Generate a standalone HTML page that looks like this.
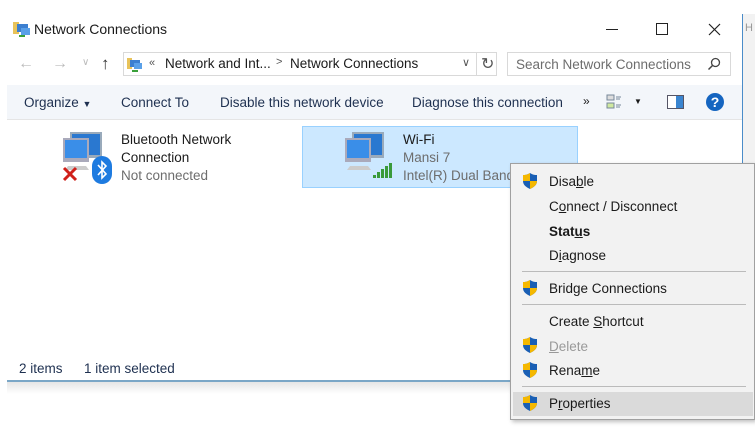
<!DOCTYPE html>
<html><head><style>
body{margin:0;width:755px;height:430px;background:#fff;position:relative;overflow:hidden;font-family:"Liberation Sans",sans-serif;font-size:13.5px;color:#1a1a1a}
.a{position:absolute;white-space:nowrap}
.g{color:#6d6d6d}
.menu .it{position:absolute;left:38px}
u{text-decoration:underline}
</style></head><body>
<!-- window frame -->
<div class="a" style="left:742px;top:14px;width:1px;height:150px;background:#4a8cc9"></div>
<div class="a" style="left:743px;top:14px;width:12px;height:150px;background:#f2f2f2"></div>
<div class="a" style="left:745px;top:22px;font-size:11px;color:#999">H</div>
<!-- title -->
<svg class="a" style="left:12px;top:20px" width="20" height="18"><rect x="1" y="2" width="6" height="12" fill="#e8c35a"/><rect x="5" y="4" width="11" height="8" fill="#3c7fd0"/><rect x="9" y="8" width="9" height="7" fill="#5aa0e8"/><rect x="7" y="15" width="6" height="2" fill="#3aa03a"/></svg>
<div class="a" style="left:34px;top:21px;font-size:14px">Network Connections</div>
<div class="a" style="left:606px;top:29px;width:12px;height:1px;background:#222"></div>
<div class="a" style="left:656px;top:23px;width:10px;height:10px;border:1px solid #222"></div>
<svg class="a" style="left:708px;top:23px" width="13" height="13"><path d="M1 1L12 12M12 1L1 12" stroke="#222" stroke-width="1.2"/></svg>
<!-- nav -->
<div class="a" style="left:18px;top:55px;color:#bbb;font-size:16px">←</div>
<div class="a" style="left:52px;top:55px;color:#bbb;font-size:16px">→</div>
<div class="a" style="left:82px;top:57px;color:#bbb;font-size:10px">∨</div>
<div class="a" style="left:101px;top:54px;color:#333;font-size:17px">↑</div>
<div class="a" style="left:123px;top:52px;width:374px;height:24px;border:1px solid #d9d9d9;box-sizing:border-box"></div>
<div class="a" style="left:476px;top:52px;width:1px;height:24px;background:#d9d9d9"></div>
<svg class="a" style="left:126px;top:56px" width="18" height="17"><rect x="1" y="2" width="5" height="11" fill="#e8c35a"/><rect x="4" y="4" width="10" height="7" fill="#3c7fd0"/><rect x="8" y="7" width="8" height="6" fill="#5aa0e8"/><rect x="6" y="14" width="6" height="2" fill="#3aa03a"/></svg>
<div class="a" style="left:149px;top:57px;font-size:11px;color:#555">«</div>
<div class="a" style="left:165px;top:56px">Network and Int...</div>
<div class="a" style="left:276px;top:56px;font-size:11px;color:#555">&gt;</div>
<div class="a" style="left:290px;top:56px">Network Connections</div>
<div class="a" style="left:462px;top:56px;font-size:11px;color:#555">∨</div>
<div class="a" style="left:481px;top:54px;font-size:16px;color:#555">↻</div>
<div class="a" style="left:507px;top:52px;width:224px;height:24px;border:1px solid #d9d9d9;box-sizing:border-box"></div>
<div class="a g" style="left:516px;top:57px">Search Network Connections</div>
<svg class="a" style="left:707px;top:57px" width="14" height="14"><circle cx="8.5" cy="5.5" r="4" fill="none" stroke="#444" stroke-width="1.3"/><path d="M5.5 8.5L1.5 12.5" stroke="#444" stroke-width="1.5"/></svg>
<!-- command bar -->
<div class="a" style="left:7px;top:85px;width:735px;height:34px;background:#f3f6fa;border-bottom:1px solid #e5e5e5"></div>
<div class="a" style="left:24px;top:95px;color:#1e3050">Organize <span style="font-size:9px">▼</span></div>
<div class="a" style="left:121px;top:95px;color:#1e3050">Connect To</div>
<div class="a" style="left:220px;top:95px;color:#1e3050">Disable this network device</div>
<div class="a" style="left:412px;top:95px;color:#1e3050">Diagnose this connection</div>
<div class="a" style="left:583px;top:94px;font-size:12px">»</div>
<svg class="a" style="left:606px;top:93px" width="18" height="18"><rect x="1" y="2" width="7" height="5" fill="#ddd" stroke="#789"/><rect x="1" y="10" width="7" height="5" fill="#cfe8a0" stroke="#789"/><path d="M10 4h5M10 6h4M10 12h5M10 14h4" stroke="#789"/></svg>
<div class="a" style="left:634px;top:97px;font-size:8px">▼</div>
<div class="a" style="left:667px;top:95px;width:15px;height:12px;border:1px solid #556;background:linear-gradient(90deg,#fff 55%,#3a85d0 55%)"></div>
<div class="a" style="left:706px;top:93px;width:18px;height:18px;border-radius:50%;background:#1565c0;color:#fff;font-weight:bold;font-size:14px;text-align:center;line-height:18px">?</div>
<!-- bluetooth item -->
<svg class="a" style="left:60px;top:128px" width="56" height="58"><rect x="10" y="4" width="32" height="26" fill="#9ab" /><rect x="12" y="6" width="28" height="21" fill="#2a78d0"/><rect x="3" y="10" width="26" height="24" fill="#aab"/><rect x="5" y="12" width="22" height="18" fill="#3a8ee8"/><path d="M8 38h18l3 4H5z" fill="#ccc"/></svg>
<svg class="a" style="left:62px;top:166px" width="16" height="16"><path d="M2 2L14 14M14 2L2 14" stroke="#d0201a" stroke-width="3"/></svg>
<div class="a" style="left:92px;top:156px;width:20px;height:28px;border-radius:10px;background:#1e7be0"></div>
<svg class="a" style="left:92px;top:156px" width="20" height="28"><path d="M6 9l8 9-4 4V6l4 4-8 9" stroke="#fff" stroke-width="1.6" fill="none"/></svg>
<div class="a" style="left:121px;top:132px">Bluetooth Network</div>
<div class="a" style="left:121px;top:150px">Connection</div>
<div class="a g" style="left:121px;top:168px">Not connected</div>
<!-- wifi item -->
<div class="a" style="left:302px;top:126px;width:276px;height:62px;background:#cce8ff;border:1px solid #99d1ff;box-sizing:border-box"></div>
<svg class="a" style="left:342px;top:128px" width="56" height="52"><rect x="10" y="4" width="32" height="26" fill="#9ab"/><rect x="12" y="6" width="28" height="21" fill="#2a78d0"/><rect x="3" y="10" width="26" height="24" fill="#aab"/><rect x="5" y="12" width="22" height="18" fill="#3a8ee8"/><path d="M8 38h18l3 4H5z" fill="#ccc"/><path d="M31 50h3v-3h-3zM35 50h3v-6h-3zM39 50h3v-9h-3zM43 50h3v-12h-3zM47 50h3v-15h-3z" fill="#3a9a3a"/></svg>
<div class="a" style="left:403px;top:132px">Wi-Fi</div>
<div class="a g" style="left:403px;top:150px">Mansi 7</div>
<div class="a g" style="left:403px;top:168px">Intel(R) Dual Band</div>
<!-- status bar -->
<div class="a" style="left:19px;top:361px;color:#1e3050">2 items</div>
<div class="a" style="left:84px;top:361px;color:#1e3050">1 item selected</div>
<div class="a" style="left:7px;top:380px;width:505px;height:2px;background:#7ba7c7"></div>
<div class="a" style="left:7px;top:382px;width:505px;height:12px;background:linear-gradient(#e6e6e6,#fff)"></div>
<!-- context menu -->
<div class="a menu" style="left:510px;top:163px;width:245px;height:257px;background:#f2f2f2;border:1px solid #a0a0a0;box-sizing:border-box;box-shadow:2px 2px 4px rgba(0,0,0,.25)">
<div class="a" style="left:2px;top:228px;width:240px;height:24px;background:#dadada"></div>
<div class="it a" style="top:10px">Disa<u>b</u>le</div>
<div class="it a" style="top:35px">C<u>o</u>nnect / Disconnect</div>
<div class="it a" style="top:60px;font-weight:bold">Stat<u>u</u>s</div>
<div class="it a" style="top:84px">D<u>i</u>agnose</div>
<div class="a" style="left:11px;top:107px;width:224px;height:1px;background:#bbb"></div>
<div class="it a" style="top:117px">Brid<u>g</u>e Connections</div>
<div class="a" style="left:11px;top:140px;width:224px;height:1px;background:#bbb"></div>
<div class="it a" style="top:150px">Create <u>S</u>hortcut</div>
<div class="it a" style="top:175px;color:#999"><u>D</u>elete</div>
<div class="it a" style="top:199px">Rena<u>m</u>e</div>
<div class="a" style="left:11px;top:222px;width:224px;height:1px;background:#bbb"></div>
<div class="it a" style="top:232px">P<u>r</u>operties</div>
</div>
<svg width="0" height="0" style="position:absolute"><defs><g id="sh"><path d="M8 1C5 3 3 3 1 3v6c0 4 3 6 7 8 4-2 7-4 7-8V3c-2 0-4 0-7-2z" fill="#1a5fb4"/><path d="M8 1v8H1V3c2 0 4 0 7-2zM8 9h7c0 4-3 6-7 8z" fill="#f5b800"/></g></defs></svg>
<svg class="a" style="left:522px;top:172px" width="16" height="18"><use href="#sh"/></svg>
<svg class="a" style="left:522px;top:279px" width="16" height="18"><use href="#sh"/></svg>
<svg class="a" style="left:522px;top:336px" width="16" height="18"><use href="#sh"/></svg>
<svg class="a" style="left:522px;top:361px" width="16" height="18"><use href="#sh"/></svg>
<svg class="a" style="left:522px;top:394px" width="16" height="18"><use href="#sh"/></svg>
</body></html>
